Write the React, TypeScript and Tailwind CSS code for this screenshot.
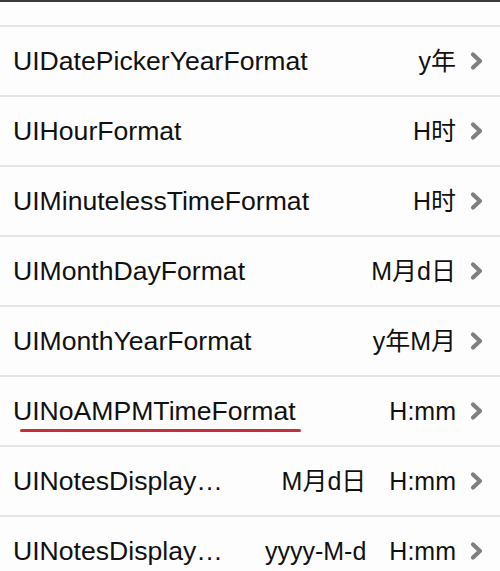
import React from 'react';

interface Row {
  label: string;
  values: string[];
  underline?: boolean;
}

const rows: Row[] = [
  { label: 'UIDatePickerYearFormat', values: ['y年'] },
  { label: 'UIHourFormat', values: ['H时'] },
  { label: 'UIMinutelessTimeFormat', values: ['H时'] },
  { label: 'UIMonthDayFormat', values: ['M月d日'] },
  { label: 'UIMonthYearFormat', values: ['y年M月'] },
  { label: 'UINoAMPMTimeFormat', values: ['H:mm'], underline: true },
  { label: 'UINotesDisplay…', values: ['M月d日', 'H:mm'] },
  { label: 'UINotesDisplay…', values: ['yyyy-M-d', 'H:mm'] },
];

const Chevron = () => (
  <svg width="16" height="20" viewBox="0 0 16 20" className="shrink-0">
    <path d="M4 3.5 L11 10 L4 16.5" fill="none" stroke="#7f7f7f" strokeWidth="4.2" strokeLinecap="round" strokeLinejoin="round" />
  </svg>
);

export default function App() {
  return (
    <div
      className="w-[500px] h-[571px] overflow-hidden bg-[#fdfdfd] text-[#111]"
      style={{ fontFamily: '"Liberation Sans", Arial, "Noto Sans CJK SC", sans-serif' }}
    >
      <div className="h-[2px] bg-[#3a3a3a]" />
      <div className="h-[23px]" />
      {rows.map((row, i) => (
        <div key={i} className="border-t-2 border-[#e4e4e4]">
          <div className="h-[68px] flex items-center pl-[13px] pr-[15px]">
            <div className="relative flex-1 text-[26.6px] leading-none">
              {row.label}
              {row.underline && (
                <div className="absolute left-[7px] w-[281px] top-[31px] h-[3px] rounded-full bg-[#c42f3b]" />
              )}
            </div>
            <div className="flex items-center gap-[23px] text-[25px] leading-none mr-[13px]">
              {row.values.map((v, j) => (
                <span key={j}>{v}</span>
              ))}
            </div>
            <Chevron />
          </div>
        </div>
      ))}
    </div>
  );
}
